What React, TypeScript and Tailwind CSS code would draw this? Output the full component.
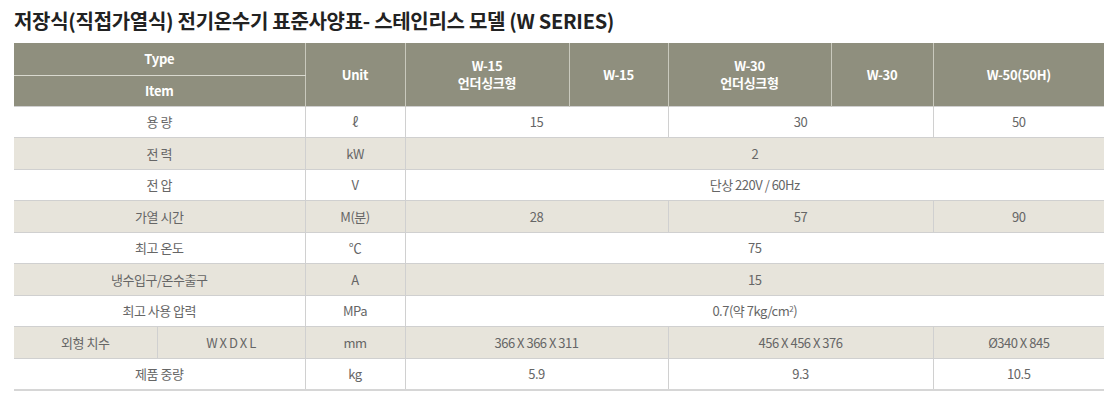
const rows: { label: React.ReactNode; unit: string; cells: { text: React.ReactNode; span: number }[]; alt: boolean; split?: [string, string] }[] = [
  { label: "용 량", unit: "ℓ", alt: false, cells: [{ text: "15", span: 2 }, { text: "30", span: 2 }, { text: "50", span: 1 }] },
  { label: "전 력", unit: "kW", alt: true, cells: [{ text: "2", span: 5 }] },
  { label: "전 압", unit: "V", alt: false, cells: [{ text: "단상 220V / 60Hz", span: 5 }] },
  { label: "가열 시간", unit: "M(분)", alt: true, cells: [{ text: "28", span: 2 }, { text: "57", span: 2 }, { text: "90", span: 1 }] },
  { label: "최고 온도", unit: "℃", alt: false, cells: [{ text: "75", span: 5 }] },
  { label: "냉수입구/온수출구", unit: "A", alt: true, cells: [{ text: "15", span: 5 }] },
  {
    label: "최고 사용 압력",
    unit: "MPa",
    alt: false,
    cells: [
      {
        text: (
          <>
            0.7(약 7kg/cm<sup className="text-[8px]">2</sup>)
          </>
        ),
        span: 5,
      },
    ],
  },
  {
    label: "",
    split: ["외형 치수", "W X D X L"],
    unit: "mm",
    alt: true,
    cells: [{ text: "366 X 366 X 311", span: 2 }, { text: "456 X 456 X 376", span: 2 }, { text: "Ø340 X 845", span: 1 }],
  },
  { label: "제품 중량", unit: "kg", alt: false, cells: [{ text: "5.9", span: 2 }, { text: "9.3", span: 2 }, { text: "10.5", span: 1 }] },
];

const font = { fontFamily: '"Noto Sans CJK KR", "Noto Sans", sans-serif' };

export default function App() {
  const th = "border-x border-[#c9c9bd] text-center font-bold text-white text-[13px] leading-[17px] tracking-[-0.3px]";
  const td = "h-[31.5px] border border-[#d0d0d0] text-center text-[13px] text-[#666] tracking-[-0.5px]";

  return (
    <div className="w-[1118px] h-[401px] bg-white pt-[7px] pl-[14px]" style={font}>
      <h2 className="text-[20px] font-bold leading-[28px] text-[#222] tracking-[-0.3px] mb-[8px]">
        저장식(직접가열식) 전기온수기 표준사양표- 스테인리스 모델 (W SERIES)
      </h2>
      <table className="w-[1090px] table-fixed border-collapse border-b-2 border-b-[#d6d6d6]">
        <colgroup>
          <col className="w-[143px]" />
          <col className="w-[148px]" />
          <col className="w-[100px]" />
          <col className="w-[164px]" />
          <col className="w-[99px]" />
          <col className="w-[163px]" />
          <col className="w-[102px]" />
          <col className="w-[171px]" />
        </colgroup>
        <thead className="bg-[#8f8f7e]">
          <tr className="h-[32px]">
            <th colSpan={2} className={`${th} border-l-0 border-b border-b-[#d9d9cf]`}>
              Type
            </th>
            <th rowSpan={2} className={th}>Unit</th>
            <th rowSpan={2} className={th}>
              W-15
              <br />
              언더싱크형
            </th>
            <th rowSpan={2} className={th}>W-15</th>
            <th rowSpan={2} className={th}>
              W-30
              <br />
              언더싱크형
            </th>
            <th rowSpan={2} className={th}>W-30</th>
            <th rowSpan={2} className={`${th} border-r-0`}>W-50(50H)</th>
          </tr>
          <tr className="h-[31px]">
            <th colSpan={2} className={`${th} border-l-0`}>Item</th>
          </tr>
        </thead>
        <tbody>
          {rows.map((r, i) => (
            <tr key={i} className={r.alt ? "bg-[#e7e4db]" : "bg-white"}>
              {r.split ? (
                <>
                  <td className={`${td} border-l-0`}>{r.split[0]}</td>
                  <td className={td}>{r.split[1]}</td>
                </>
              ) : (
                <td colSpan={2} className={`${td} border-l-0`}>
                  {r.label}
                </td>
              )}
              <td className={td}>{r.unit}</td>
              {r.cells.map((c, j) => (
                <td key={j} colSpan={c.span} className={`${td} ${j === r.cells.length - 1 ? "border-r-0" : ""}`}>
                  {c.text}
                </td>
              ))}
            </tr>
          ))}
        </tbody>
      </table>
    </div>
  );
}
